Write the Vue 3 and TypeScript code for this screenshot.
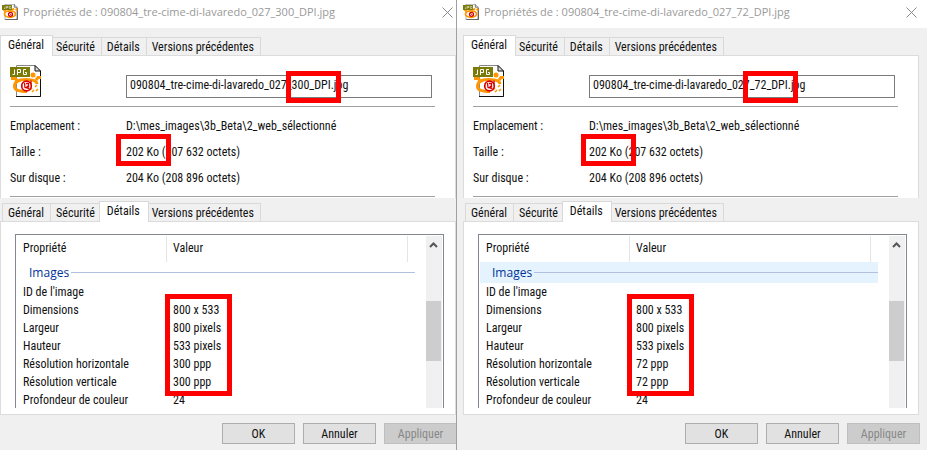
<script setup lang="ts">
interface Dialog {
  id: string
  file: string
  dpi: string
  highlighted: boolean
}

const dialogs: Dialog[] = [
  { id: 'left', file: '090804_tre-cime-di-lavaredo_027_300_DPI.jpg', dpi: '300 ppp', highlighted: false },
  { id: 'right', file: '090804_tre-cime-di-lavaredo_027_72_DPI.jpg', dpi: '72 ppp', highlighted: true },
]

const tabs: string[] = ['Général', 'Sécurité', 'Détails', 'Versions précédentes']

const facts: [string, string][] = [
  ['Emplacement :', 'D:\\mes_images\\3b_Beta\\2_web_sélectionné'],
  ['Taille :', '202 Ko (207 632 octets)'],
  ['Sur disque :', '204 Ko (208 896 octets)'],
]

function details(d: Dialog): [string, string][] {
  return [
    ["ID de l'image", ''],
    ['Dimensions', '800 x 533'],
    ['Largeur', '800 pixels'],
    ['Hauteur', '533 pixels'],
    ['Résolution horizontale', d.dpi],
    ['Résolution verticale', d.dpi],
    ['Profondeur de couleur', '24'],
  ]
}
</script>

<template>
  <main class="desktop">
    <section v-for="d in dialogs" :key="d.id" class="dialog" :class="d.id">
      <header class="titlebar">
        <svg class="file-icon small" viewBox="0 0 32 32" aria-hidden="true">
          <path d="M6 .5H24.500L30.500 6.500V31.500H6Z" fill="#fff" stroke="#555" />
          <path d="M24.500 .5V6.500H30.500" fill="#ccc" stroke="#222" />
          <path d="M7 31.500H30.500V8" fill="none" stroke="#222" stroke-width="1.500" />
          <ellipse cx="16" cy="20" rx="11" ry="6.500" fill="#fff" stroke="#ff9500" stroke-width="3.500" />
          <path d="M3 12l5 3M27 12l4-2M20 12l4-3" stroke="#ff9500" stroke-width="4" />
          <circle cx="17" cy="20.500" r="4" fill="#fff" stroke="#d40000" stroke-width="2.500" />
          <path d="M15 19l4 3" stroke="#d40000" stroke-width="2" />
          <rect x="0" y="2" width="20" height="10" fill="#7b7b08" />
          <path d="M4 9h2V5M9 9V5h3v2H9M18 5h-3v4h3V7" fill="none" stroke="#fff" />
        </svg>
        <h1>Propriétés de : {{ d.file }}</h1>
        <button class="close" type="button" aria-label="Fermer">
          <svg viewBox="0 0 11 11"><path d="M.5 .5l10 10M10.500 .5l-10 10" fill="none" stroke="#888" /></svg>
        </button>
      </header>

      <div class="body">
        <nav class="tabs first">
          <button v-for="(t, i) in tabs" :key="t" type="button" class="tab" :class="{ active: i === 0 }">{{ t }}</button>
        </nav>
        <div class="panel general">
          <div class="name-row">
            <svg class="file-icon" viewBox="0 0 32 32" aria-hidden="true">
              <path d="M6.500 .5H25L30.500 6V31.500H6.500Z" fill="#fff" stroke="#888" />
              <path d="M25 .5V6H30.500Z" fill="#ddd" stroke="#111" />
              <path d="M6 31.500H30.500V6" fill="none" stroke="#111" />
              <path d="M4.500 21.500C4.500 17 9 14.500 16 14.500C23 14.500 27 16 27 19M4.500 21.500C4.500 25.500 9 26.500 17 26.500" fill="none" stroke="#ff9500" stroke-width="3" />
              <path d="M1 13.500h4l2 2M26 15l2-2.500h3" fill="none" stroke="#ff9500" stroke-width="3" />
              <circle cx="23" cy="10" r="2.500" fill="#ff9500" />
              <path d="M22 27l2-2M26 26l2-2M25 22l2-2M20 25l2-2" stroke="#ff9500" stroke-width="1.500" />
              <circle cx="16.500" cy="21" r="4.800" fill="#fff" stroke="#d40000" stroke-width="1.700" />
              <path d="M14.500 18L15 22.500L19.500 23.500M16 18.500H18.500V21.500H16.500M21 15.500V19" fill="none" stroke="#d40000" stroke-width="1.300" />
              <rect x="0" y="2" width="20" height="10" fill="#7b7b08" />
              <path d="M2.500 9.500H4.500V4.500M7.500 10V4.500H10.500V7.500H7.500M16 4.500H13.500V9.500H16.500V7.500H15" fill="none" stroke="#fff" />
            </svg>
            <input type="text" :value="d.file" aria-label="Nom du fichier" />
          </div>
          <dl class="facts">
            <div v-for="[k, v] in facts" :key="k">
              <dt>{{ k }}</dt>
              <dd>{{ v }}</dd>
            </div>
          </dl>
        </div>

        <nav class="tabs">
          <button v-for="(t, i) in tabs" :key="t" type="button" class="tab" :class="{ active: i === 2 }">{{ t }}</button>
        </nav>
        <div class="panel">
          <div class="list">
            <table>
              <thead>
                <tr>
                  <th scope="col" class="prop">Propriété</th>
                  <th scope="col">Valeur</th>
                  <td class="rest"></td>
                </tr>
              </thead>
              <tbody>
                <tr class="group" :class="{ highlighted: d.highlighted }">
                  <th colspan="3"><span>Images</span></th>
                </tr>
                <tr v-for="[k, v] in details(d)" :key="k"><td>{{ k }}</td><td colspan="2">{{ v }}</td></tr>
              </tbody>
            </table>
            <div class="scrollbar">
              <svg viewBox="0 0 9 6"><path d="M1 5L4.500 1.500L8 5" fill="none" stroke="#555" stroke-width="2" /></svg>
              <div class="thumb"></div>
            </div>
          </div>
        </div>

        <footer>
          <button type="button">OK</button>
          <button type="button">Annuler</button>
          <button type="button" disabled>Appliquer</button>
        </footer>

        <span class="mark mark-name"></span>
        <span class="mark mark-size"></span>
        <span class="mark mark-details"></span>
      </div>
    </section>
  </main>
</template>

<style>
body {
  background: #f0f0f0;
}
</style>

<style scoped>
.desktop {
  display: grid;
  grid-template-columns: 457fr 470fr;
  min-height: 100vh;
  font: 12px/18px "Roboto Condensed", "Liberation Sans", sans-serif;
  color: #111;
}
.desktop * {
  box-sizing: border-box;
}
.dialog {
  overflow: hidden;
  background: #f0f0f0;
}
.left {
  border-right: 1px solid #a0a0a0;
}
.right .body {
  margin: 0 8px 0 6px;
}
.titlebar {
  display: flex;
  align-items: center;
  height: 28px;
  padding: 0 3px 4px 2px;
  background: #fff;
}
.right .titlebar {
  padding-left: 6px;
  padding-right: 10px;
}
.file-icon {
  flex: none;
  width: 32px;
  height: 32px;
}
.file-icon.small {
  width: 16px;
  height: 16px;
}
h1 {
  flex: 1;
  margin: 0 0 0 5px;
  font: 11px/18px "Open Sans", sans-serif;
  color: #999;
  white-space: nowrap;
}
button {
  font: inherit;
  color: inherit;
}
.close {
  display: flex;
  padding: 0;
  border: 0;
  background: none;
}
.close svg {
  width: 11px;
  height: 11px;
}
.body {
  position: relative;
}
.tabs {
  display: flex;
  align-items: flex-end;
  height: 23px;
  padding-left: 2px;
}
.tabs.first {
  height: 27px;
}
.tab {
  height: 18px;
  margin-right: -1px;
  padding: 0 6px 0 5px;
  border: 1px solid #d9d9d9;
  border-bottom: 0;
  background: #f0f0f0;
  line-height: 18px;
  white-space: nowrap;
}
.tab.active {
  position: relative;
  height: 21px;
  margin: 0 -3px -1px -2px;
  padding: 0 8px 2px 7px;
  background: #fff;
}
.panel {
  padding: 12px 11px 6px 14px;
  border: 1px solid #dcdcdc;
  background: #fff;
}
.general {
  padding: 9px 20px 1px 9px;
  border-bottom: 0;
}
.name-row {
  display: flex;
  gap: 84px;
  height: 42px;
  border-bottom: 1px solid #a0a0a0;
}
.name-row input {
  flex: 1;
  min-width: 0;
  height: 23px;
  margin: 10px 3px 0 0;
  padding: 0 3px 3px;
  border: 1px solid #7a7a7a;
  border-radius: 0;
  font: inherit;
  color: inherit;
}
.facts {
  margin: 0;
  padding: 6px 0 5px;
  border-bottom: 1px solid #a0a0a0;
}
.facts div {
  display: flex;
  height: 26px;
  align-items: center;
}
.facts dt {
  width: 116px;
}
.facts dd {
  margin: 0;
}
.list {
  display: flex;
  justify-content: space-between;
  height: 174px;
  overflow: hidden;
  padding: 1px 1px 0;
  border: 1px solid #828790;
  border-bottom: 0;
}
table {
  flex: 1;
  align-self: flex-start;
  margin-right: 11px;
  border-spacing: 0;
  table-layout: fixed;
}
th {
  font-weight: normal;
  text-align: left;
}
th,
td {
  height: 18px;
  padding: 0 6px;
}
thead th {
  height: 26px;
  padding-bottom: 2px;
  border-right: 1px solid #e5e5e5;
}
.prop {
  width: 150px;
}
.rest {
  width: 7px;
  padding: 0;
}
.group th {
  height: 21px;
  padding: 0 0 0 12px;
}
.group span {
  display: flex;
  align-items: center;
  gap: 2px;
  font: 12px/18px "Open Sans", sans-serif;
  color: #003399;
}
.group span::after {
  content: "";
  flex: 1;
  height: 1px;
  background: #b0c0de;
}
.group.highlighted {
  background: #e5f3ff;
}
.scrollbar {
  width: 16px;
  padding: 6px 1px 0 0;
  background: #f0f0f0;
}
.scrollbar svg {
  display: block;
  width: 9px;
  height: 6px;
  margin: 0 auto 53px;
}
.thumb {
  height: 60px;
  background: #cdcdcd;
}
footer {
  display: flex;
  justify-content: flex-end;
  gap: 8px;
  padding-top: 8px;
  margin-right: -1px;
}
footer button {
  flex: none;
  width: 73px;
  height: 21px;
  padding: 0;
  border: 1px solid #adadad;
  background: #e1e1e1;
}
footer button:disabled {
  border-color: #bfbfbf;
  background: #ccc;
  color: #888;
}
.mark {
  position: absolute;
  border: 5px solid #f00;
  pointer-events: none;
}
.mark-name {
  left: 286px;
  top: 43px;
  width: 55px;
  height: 32px;
}
.mark-size {
  left: 116px;
  top: 106px;
  width: 55px;
  height: 32px;
}
.mark-details {
  left: 165px;
  top: 266px;
  width: 67px;
  height: 102px;
}
.right .mark-name {
  left: 280px;
}
.right .mark-size {
  left: 118px;
}
.right .mark-details {
  left: 164px;
}
</style>
